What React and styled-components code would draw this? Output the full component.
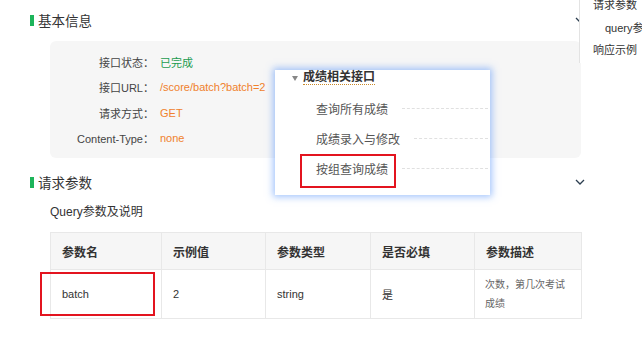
import styled, { createGlobalStyle } from "styled-components";

const GlobalStyle = createGlobalStyle`
  html, body {
    margin: 0;
    padding: 0;
    background: #fff;
    font-family: "Liberation Sans", "Noto Sans CJK SC", sans-serif;
    color: #333;
  }
`;

const Chevron = () => (
  <svg width="10" height="6" viewBox="0 0 10 6" fill="none">
    <path d="M1 1l4 4 4-4" stroke="#2c3e50" strokeWidth="1.3" />
  </svg>
);

const infoRows = [
  { label: "接口状态：", value: "已完成", tone: "green" },
  { label: "接口URL：", value: "/score/batch?batch=2", tone: "orange" },
  { label: "请求方式：", value: "GET", tone: "orange" },
  { label: "Content-Type：", value: "none", tone: "orange" },
];

const columns = ["参数名", "示例值", "参数类型", "是否必填", "参数描述"];

const treeItems = ["查询所有成绩", "成绩录入与修改", "按组查询成绩"];

const App = () => {
  return (
    <Page>
      <GlobalStyle />
      <Main>
        <SectionHeader>
          <SectionTitle>基本信息</SectionTitle>
          <Chevron />
        </SectionHeader>
        <InfoCard>
          {infoRows.map((row) => (
            <InfoRow key={row.label}>
              <InfoLabel>{row.label}</InfoLabel>
              <InfoValue tone={row.tone}>{row.value}</InfoValue>
            </InfoRow>
          ))}
        </InfoCard>

        <SectionHeader second>
          <SectionTitle>请求参数</SectionTitle>
          <Chevron />
        </SectionHeader>
        <SubTitle>Query参数及说明</SubTitle>
        <Table>
          <thead>
            <tr>
              {columns.map((c) => (
                <Th key={c}>{c}</Th>
              ))}
            </tr>
          </thead>
          <tbody>
            <tr>
              <Td>
                <Marked>batch</Marked>
              </Td>
              <Td>2</Td>
              <Td>string</Td>
              <Td>是</Td>
              <Td small>次数，第几次考试成绩</Td>
            </tr>
          </tbody>
        </Table>
      </Main>

      <Popup>
        <TreeHead>
          <Caret />
          <TreeHeadText>成绩相关接口</TreeHeadText>
        </TreeHead>
        <TreeList>
          {treeItems.map((item, i) => (
            <TreeItem key={item}>
              <TreeText>{item}</TreeText>
              <DashLine />
              {i === 2 && <Highlight />}
            </TreeItem>
          ))}
        </TreeList>
      </Popup>

      <Sidebar>
        <SideLink>请求参数</SideLink>
        <SideLink indent>query参数</SideLink>
        <SideLink>响应示例</SideLink>
      </Sidebar>
    </Page>
  );
};

const Page = styled.div`
  position: relative;
  width: 642px;
  height: 340px;
  overflow: hidden;
`;

const Main = styled.div`
  padding: 10px 0 0 30px;
  width: 552px;
`;

const SectionHeader = styled.div`
  display: flex;
  align-items: center;
  justify-content: space-between;
  height: 20px;
  margin-top: ${({ second }) => (second ? "14px" : "0")};
  width: 555px;
`;

const SectionTitle = styled.div`
  display: flex;
  align-items: center;
  font-size: 13.5px;
  color: #333;
  &::before {
    content: "";
    width: 4px;
    height: 11px;
    background: #1db45a;
    margin-right: 4px;
  }
`;

const InfoCard = styled.div`
  margin: 11px 0 0 20px;
  width: 531px;
  padding: 8px 0 7px;
  background: #f6f6f6;
  border-radius: 6px;
`;

const InfoRow = styled.div`
  display: grid;
  grid-template-columns: 104px 1fr;
  column-gap: 6px;
  align-items: center;
  height: 25.5px;
  font-size: 11px;
`;

const InfoLabel = styled.div`
  text-align: right;
  color: #444;
`;

const InfoValue = styled.div`
  color: ${({ tone }) => (tone === "green" ? "#1a9b4f" : "#f0812d")};
`;

const SubTitle = styled.div`
  margin: 10px 0 0 20px;
  height: 20px;
  line-height: 20px;
  font-size: 12px;
  color: #333;
`;

const Table = styled.table`
  margin: 10px 0 0 20px;
  width: 532px;
  border-collapse: collapse;
  table-layout: fixed;
  font-size: 11px;
  color: #333;
`;

const Th = styled.th`
  height: 36px;
  padding: 0 0 0 11px;
  text-align: left;
  font-weight: bold;
  font-size: 12px;
  color: #333;
  background: #f6f6f6;
  border: 1px solid #e8e8e8;
  &:nth-child(1) { width: 99px; }
  &:nth-child(2) { width: 92px; }
  &:nth-child(3) { width: 93px; }
  &:nth-child(4) { width: 92px; }
`;

const Td = styled.td`
  position: relative;
  height: 48px;
  padding: ${({ small }) => (small ? "0 16px 0 10px" : "0 0 0 11px")};
  border: 1px solid #e8e8e8;
  font-size: ${({ small }) => (small ? "10px" : "11px")};
  line-height: ${({ small }) => (small ? "19px" : "normal")};
  color: ${({ small }) => (small ? "#666" : "#333")};
`;

const Marked = styled.span`
  &::after {
    content: "";
    position: absolute;
    left: -11px;
    top: 2px;
    width: 111px;
    height: 40px;
    border: 2px solid #e3141f;
  }
`;

const Popup = styled.div`
  position: absolute;
  left: 275px;
  top: 70px;
  width: 215px;
  height: 125px;
  background: #fff;
  box-shadow: 0 0 7px 2px rgba(90, 150, 250, 0.55);
  font-size: 12px;
  color: #555;
`;

const TreeHead = styled.div`
  display: flex;
  align-items: center;
  height: 16px;
  padding-left: 17px;
`;

const Caret = styled.span`
  width: 0;
  height: 0;
  border-left: 3.5px solid transparent;
  border-right: 3.5px solid transparent;
  border-top: 5px solid #888;
  margin-right: 5px;
`;

const TreeHeadText = styled.span`
  font-weight: bold;
  color: #333;
  line-height: 13px;
  border-bottom: 1px dotted #c98a2a;
`;

const TreeList = styled.div`
  margin-top: 7px;
`;

const TreeItem = styled.div`
  position: relative;
  display: flex;
  align-items: center;
  height: 30px;
  padding-left: 41px;
`;

const TreeText = styled.span`
  white-space: nowrap;
`;

const DashLine = styled.span`
  flex: 1;
  margin: 0 2px 0 14px;
  border-top: 1px dashed #e0e0e0;
`;

const Highlight = styled.span`
  position: absolute;
  left: 25px;
  top: 1px;
  width: 92px;
  height: 30px;
  border: 2px solid #e3141f;
`;

const Sidebar = styled.div`
  position: absolute;
  left: 579px;
  top: 0;
  width: 63px;
  height: 63px;
  background: #fff;
  border-left: 1px solid #e3e3e3;
  font-size: 11px;
  color: #333;
`;

const SideLink = styled.div`
  height: 22.5px;
  line-height: 22.5px;
  padding-left: ${({ indent }) => (indent ? "25px" : "13px")};
  white-space: nowrap;
  overflow: hidden;
  &:first-child { margin-top: -6px; }
`;

export default App;
